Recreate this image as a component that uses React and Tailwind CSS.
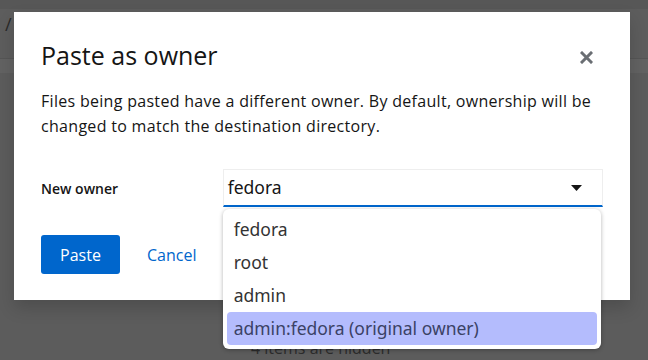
import React from 'react';

const owners = ['fedora', 'root', 'admin', 'admin:fedora (original owner)'];

function OwnerSelect({ value, highlighted }) {
  return (
    <div className="relative w-[381px] font-['Noto_Sans',sans-serif]">
      <div className="flex h-[38px] items-center justify-between border border-[#eeeeee] border-b-2 border-b-[#0066cc] pl-[4px] pr-[20px] text-[17.5px] text-[#151515]">
        <span>{value}</span>
        <svg width="11" height="6" viewBox="0 0 11 6">
          <path d="M0 0 L11 0 L5.5 6 Z" fill="#151515" />
        </svg>
      </div>

      {/* open menu */}
      <div className="absolute left-0 top-full mt-[2px] w-[378px] rounded-[6px] bg-white p-[4px] shadow-[0_1px_4px_rgba(0,0,0,0.3)]">
        {owners.map((o) => (
          <div
            key={o}
            className={
              o === highlighted
                ? 'flex h-[33px] items-center rounded-[4px] bg-[#b4bcfd] px-[7px] text-[17.5px] text-[#3b4265]'
                : 'flex h-[33px] items-center rounded-[4px] px-[7px] text-[17.5px] text-[#333333]'
            }
          >
            {o}
          </div>
        ))}
      </div>
    </div>
  );
}

export default function App() {
  return (
    <div className="relative h-[360px] w-[648px] overflow-hidden bg-[#5d5d5d] font-['Open_Sans',sans-serif]">
      {/* dimmed page behind the modal */}
      <div className="flex h-full flex-col">
        <div className="h-[11px] bg-[#575757]" />
        <div className="h-[57px] bg-[#5d5d5d] pl-[5px] pt-[2px] text-[18px] text-[#2a2a2a]">/</div>
        <div className="h-[17px] border-t border-[#555555] bg-[#626262]" />
        <div className="flex-1 bg-[#5c5c5c] pl-[251px] pt-[263px] text-[16px] text-[#2c2c2c]">4 items are hidden</div>
      </div>

      {/* modal */}
      <div className="absolute left-[14px] top-[12px] h-[288px] w-[616px] bg-white px-[27px] pt-[27px] text-[#151515] shadow-[0_8px_16px_rgba(3,3,3,0.16)]">
        <div className="flex items-start justify-between">
          <h1 className="text-[25px] leading-[32px]">Paste as owner</h1>
          <button className="mr-[10px] mt-[12px] text-[#6a6e73]">
            <svg width="13" height="13" viewBox="0 0 13 13">
              <path d="M2 2 L11 11 M11 2 L2 11" stroke="currentColor" strokeWidth="3" strokeLinecap="square" />
            </svg>
          </button>
        </div>

        <p className="mt-[18px] text-[16px] leading-[25px] tracking-[0.3px]">
          Files being pasted have a different owner. By default, ownership will be changed to match the destination
          directory.
        </p>

        <div className="mt-[30px] flex items-center">
          <label className="w-[182px] text-[14px] font-semibold">New owner</label>
          <OwnerSelect value="fedora" highlighted="admin:fedora (original owner)" />
        </div>

        <div className="mt-[28px] flex items-center">
          <button className="h-[39px] w-[79px] rounded-[3px] bg-[#0066cc] text-[16px] text-white">Paste</button>
          <button className="ml-[11px] px-[16px] text-[16px] text-[#0066cc]">Cancel</button>
        </div>
      </div>
    </div>
  );
}
